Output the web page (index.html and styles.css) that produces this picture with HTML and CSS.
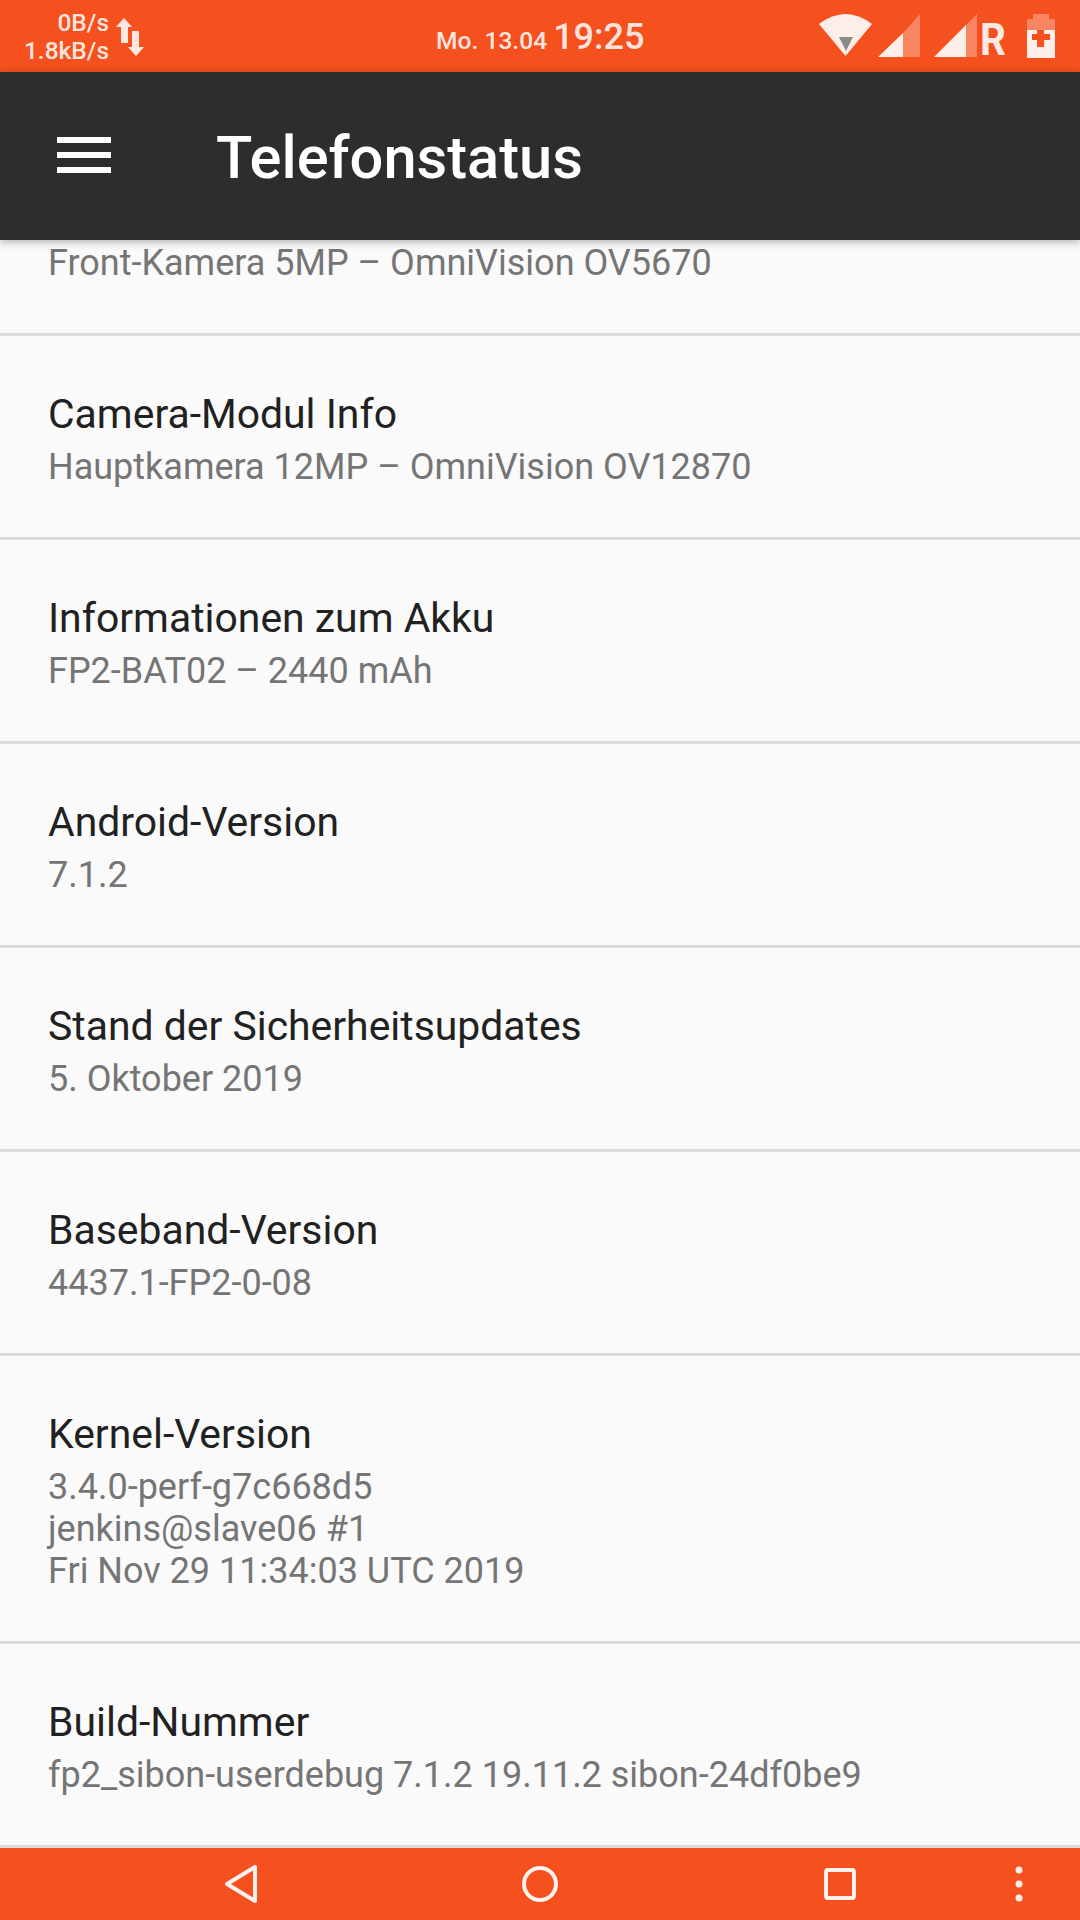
FILE: index.html
```html
<!DOCTYPE html>
<html lang="de">
<head>
<meta charset="utf-8">
<title>Telefonstatus</title>
<link rel="stylesheet" href="styles.css">
</head>
<body>
<div class="screen">
  <header class="statusbar">
    <div class="net">
      <div class="net-speed"><span>0B/s</span><span>1.8kB/s</span></div>
      <svg class="net-arrows" width="28" height="38" viewBox="0 0 28 38"><path fill="#fff" fill-opacity=".87" d="M8 0L16 9H12V25H5V9H0ZM20 38L12 29H16V13H23V29H28Z"/></svg>
    </div>
    <div class="clock"><span class="date">Mo. 13.04</span><span class="time">19:25</span></div>
    <div class="sys-icons">
      <svg width="53" height="43" viewBox="0 0 53 43"><path fill="#fff" fill-opacity=".9" d="M0 10Q26.500-10 53 10L26.500 42Z"/><path fill="#8a8a8a" d="M20 23H34L27 37Z"/></svg>
      <svg class="sig1" width="42" height="43" viewBox="0 0 42 43"><path fill="#fff" fill-opacity=".9" d="M0 43L25 19V43Z"/><path fill="#fff" fill-opacity=".3" d="M25 19L42 0V43H25Z"/></svg>
      <svg class="sig2" width="43" height="43" viewBox="0 0 43 43"><path fill="#fff" fill-opacity=".9" d="M0 43L32 11V43Z"/><path fill="#fff" fill-opacity=".3" d="M32 11L43 0V43H32Z"/></svg>
      <span class="roam">R</span>
      <svg class="batt" width="28" height="44" viewBox="0 0 28 44"><path fill="#fff" fill-opacity=".3" d="M6 0H22V5H28V16H0V5H6Z"/><path fill="#fff" fill-opacity=".9" fill-rule="evenodd" d="M0 16H28V44H0ZM10 16V20H5V26H10V33H17V26H23V20H17V16Z"/></svg>
    </div>
  </header>
  <div class="appbar">
    <svg class="menu" width="54" height="36" viewBox="0 0 54 36"><path fill="#fff" d="M0 0H54V6H0ZM0 15H54V21H0ZM0 30H54V36H0Z"/></svg>
    <h1>Telefonstatus</h1>
  </div>
  <main class="list">
    <div class="item first">
      <div class="sum">Front-Kamera 5MP – OmniVision OV5670</div>
    </div>
    <div class="item"><div class="ttl">Camera-Modul Info</div><div class="sum">Hauptkamera 12MP – OmniVision OV12870</div></div>
    <div class="item"><div class="ttl">Informationen zum Akku</div><div class="sum">FP2-BAT02 – 2440 mAh</div></div>
    <div class="item"><div class="ttl">Android-Version</div><div class="sum">7.1.2</div></div>
    <div class="item"><div class="ttl">Stand der Sicherheitsupdates</div><div class="sum">5. Oktober 2019</div></div>
    <div class="item"><div class="ttl">Baseband-Version</div><div class="sum">4437.1-FP2-0-08</div></div>
    <div class="item"><div class="ttl">Kernel-Version</div><div class="sum">3.4.0-perf-g7c668d5<br>jenkins@slave06 #1<br>Fri Nov 29 11:34:03 UTC 2019</div></div>
    <div class="item"><div class="ttl">Build-Nummer</div><div class="sum">fp2_sibon-userdebug 7.1.2 19.11.2 sibon-24df0be9</div></div>
  </main>
  <nav class="navbar">
    <svg class="nav-back" width="32" height="38" viewBox="0 0 32 38"><path fill="none" stroke="#fff" stroke-opacity=".92" stroke-width="4" stroke-linejoin="round" d="M2 19L30 2V36Z"/></svg>
    <svg class="nav-home" width="36" height="36" viewBox="0 0 36 36"><circle cx="18" cy="18" r="16" fill="none" stroke="#fff" stroke-opacity=".92" stroke-width="4"/></svg>
    <svg class="nav-recent" width="32" height="32" viewBox="0 0 32 32"><rect x="2" y="2" width="28" height="28" rx="2" fill="none" stroke="#fff" stroke-opacity=".92" stroke-width="4"/></svg>
    <svg class="nav-more" width="8" height="36" viewBox="0 0 8 36"><g fill="#fff" fill-opacity=".9"><circle cx="4" cy="4" r="3.500"/><circle cx="4" cy="18" r="3.500"/><circle cx="4" cy="32" r="3.500"/></g></svg>
  </nav>
</div>
</body>
</html>
```
FILE: styles.css
```css
* { box-sizing: border-box; }
html, body { margin: 0; padding: 0; }
body { font-family: Roboto, "Noto Sans", sans-serif; background: #fafafa; }
.screen { width: 1080px; height: 1920px; display: flex; flex-direction: column; overflow: hidden; background: #fafafa; }

.statusbar { height: 72px; flex: none; background: #f4511e; color: rgba(255,255,255,.87); position: relative; display: flex; align-items: center; justify-content: space-between; }
.net { display: flex; align-items: center; gap: 7px; margin-left: 25px; }
.net-speed { display: flex; flex-direction: column; align-items: flex-end; font-size: 24.500px; line-height: 28px; font-weight: 500; width: 84px; margin-top: 1px; }
.net-arrows { margin-top: 2px; }
.clock { position: absolute; left: 436px; top: 0; height: 72px; display: flex; align-items: baseline; padding-top: 16px; gap: 6px; }
.date { font-size: 24.600px; font-weight: 500; }
.time { font-size: 36px; font-weight: 500; }
.sys-icons { display: flex; align-items: flex-start; margin-right: 25px; padding-top: 14px; height: 72px; }
.sig1 { margin-left: 6px; }
.sig2 { margin-left: 14px; }
.roam { width: 25px; margin-left: 3px; margin-top: 10px; font-size: 45px; line-height: 32px; font-weight: 700; color: rgba(255,255,255,.9); transform: scaleX(.9); transform-origin: 0 0; }
.batt { margin-left: 22px; }

.appbar { height: 168px; flex: none; background: #2d2d2d; display: flex; align-items: center; position: relative; z-index: 1; box-shadow: 0 2px 8px rgba(0,0,0,.3); padding-left: 57px; }
.menu { margin-right: 105px; margin-top: -3px; }
.appbar h1 { margin: 6px 0 0; color: #fff; font-size: 59.600px; font-weight: 500; line-height: 1; }

.list { flex: 1; min-height: 0; }
.item { border-bottom: 3px solid #dcdcdc; padding: 46px 48px 0; height: 204px; }
.item.first { height: 96px; padding-top: 2px; }
.item:nth-child(7) { height: 288px; }
.ttl { font-size: 40.900px; line-height: 64px; color: #212121; }
.sum { font-size: 36px; line-height: 42px; color: #757575; }

.navbar { height: 72px; flex: none; background: #f4511e; position: relative; }
.nav-back { position: absolute; left: 225px; top: 17px; }
.nav-home { position: absolute; left: 522px; top: 18px; }
.nav-recent { position: absolute; left: 824px; top: 20px; }
.nav-more { position: absolute; left: 1015px; top: 18px; }
```
